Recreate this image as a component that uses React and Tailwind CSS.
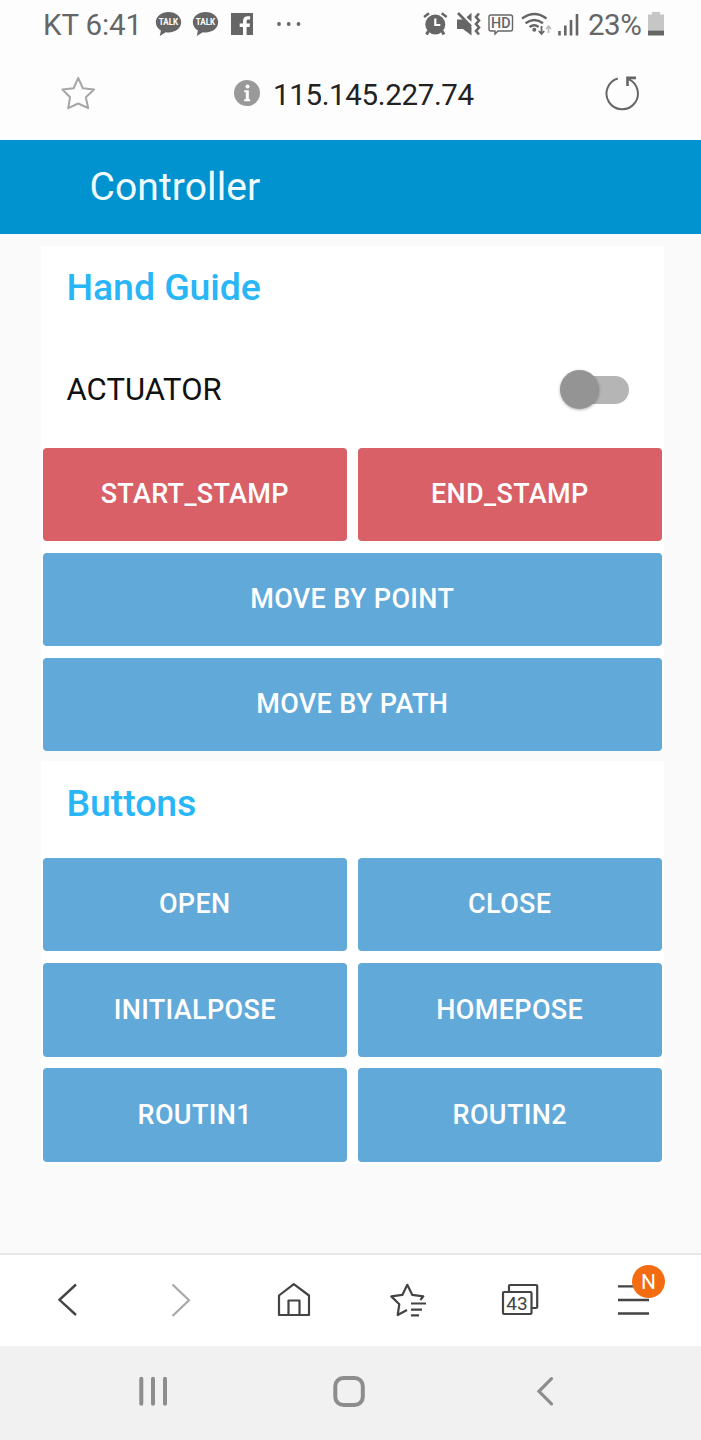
const BLUE = "bg-[#60a9d9]";
const RED = "bg-[#d96066]";

function PadButton({ label, color = BLUE, wide = false }) {
  return (
    <button
      className={`${color} ${wide ? "col-span-2" : ""} h-[93.4px] rounded-[4px] text-center text-[27px] font-medium tracking-[0.35px] text-white`}
    >
      {label}
    </button>
  );
}

function SectionTitle({ children }) {
  return <h2 className="px-[25.500px] text-[37.5px] leading-[44px] font-medium tracking-[-0.1px] text-[#29b6f6]">{children}</h2>;
}

function TalkIcon() {
  return (
    <svg width="27" height="26" viewBox="0 0 27 26" className="shrink-0">
      <path d="M13.5 1C6.3 1 .8 5.500.8 11.300c0 3.700 2.100 6.400 5.100 8.200L4.800 25l6-3.800c.9.200 1.800.2 2.700.2 7.200 0 12.700-4.300 12.700-10.100S20.700 1 13.500 1z" fill="#666" />
      <text x="13.500" y="14.400" textAnchor="middle" textLength="19.500" lengthAdjust="spacingAndGlyphs" fontFamily="Roboto, sans-serif" fontWeight="700" fontSize="9.300" fill="#fff">TALK</text>
    </svg>
  );
}

function StatusBar() {
  return (
    <div className="flex h-[50px] items-start pl-[43px] text-[29.500px] leading-[35px] text-[#666]">
      <span className="mt-[8px] w-[112px] whitespace-nowrap tracking-[-0.1px]">KT 6:41</span>
      <div className="mt-[11px] flex w-[148px] items-start">
        <TalkIcon />
        <div className="w-[10px]" />
        <TalkIcon />
        <svg width="22" height="22" viewBox="0 0 22 22" className="mt-[2px] ml-[12px] shrink-0">
          <rect width="22" height="22" fill="#666" />
          <path d="M12 22v-8H8.700v-3.400H12V8.200c0-3.200 1.800-4.900 4.700-4.900h2.400v3.300h-1.700c-1.300 0-1.800.6-1.800 1.700v2.300H19l-.5 3.400h-2.900v8z" fill="#fff" />
        </svg>
        <svg width="26" height="6" viewBox="0 0 26 6" className="mt-[10px] ml-[23px] shrink-0" fill="#666">
          <circle cx="3" cy="3" r="1.900" /><circle cx="12.700" cy="3" r="1.900" /><circle cx="22.500" cy="3" r="1.900" />
        </svg>
      </div>
      <svg width="158" height="30" viewBox="422 8 158 30" className="mt-[8px] ml-[119px] shrink-0" fill="none" stroke="#666">
        <circle cx="435.300" cy="24.500" r="10" fill="#666" stroke="none" />
        <path d="M424 17l5-3.700M446.700 17l-5-3.700" strokeWidth="2.500" />
        <path d="M428.500 31l-2 3.500M442 31l2 3.500" strokeWidth="3" />
        <path d="M435.300 18.500v6.500h5" stroke="#fff" strokeWidth="2.200" />
        <path d="M457 19.500h6l8.500 7.500v8.500l-8.500-6.500h-6zM466.500 17.200l5-4.500v9z" fill="#666" stroke="none" />
        <path d="M458 13l13 13.500" strokeWidth="2.600" />
        <path d="M479 13.500l-3 3.500 3 3.500-3 3.500 3 3.500-3 3.500 3 3.500" strokeWidth="2.600" />
        <path d="M491 15h19.500q2 0 2 2v12q0 2-2 2h-12.500l-3 3v-3h-4q-2 0-2-2v-12q0-2 2-2z" strokeWidth="1.400" />
        <text x="500.800" y="28.200" textAnchor="middle" textLength="19.500" lengthAdjust="spacingAndGlyphs" fontSize="14.500" fontWeight="500" fontFamily="Roboto, sans-serif" fill="#666" stroke="none">HD</text>
        <path d="M522 18.500q12.500-9 24.500 0M525.500 23.200q9-6.500 17.500 0M529.500 27q5-3.500 9 0" strokeWidth="2.400" />
        <circle cx="534.300" cy="29.800" r="2" fill="#666" stroke="none" />
        <path d="M541.500 26v8M538.800 31l2.700 3 2.700-3" strokeWidth="1.800" />
        <path d="M548.500 33v-7M546 29l2.500-3 2.500 3" stroke="#bbb" strokeWidth="1.600" />
        <path d="M559.500 31v4.500M565.300 25.500v10M571 20v15.500M577 14v21.500" strokeWidth="2.600" />
      </svg>
      <span className="mt-[8px] ml-[8px] w-[60px] whitespace-nowrap text-[29.500px] tracking-[-0.5px]">23%</span>
      <svg width="16" height="25" viewBox="0 0 16 25" className="mt-[12px] shrink-0">
        <path d="M4 0h8v2.500h4V18.500H0V2.500h4z" fill="#c6c6c6" />
        <path d="M0 18.500h16v5H0z" fill="#666" />
      </svg>
    </div>
  );
}

function AddressBar() {
  return (
    <div className="flex h-[90px] items-start pt-[26px]">
      <svg width="36" height="36" viewBox="0 0 36 36" className="ml-[60px] shrink-0" fill="none" stroke="#a6a6a6" strokeWidth="2" strokeLinejoin="round">
        <path d="M18.200 2l4.700 10.300 11.200 1.200-8.300 7.700 2.400 11-10-4.700-10 4.700 1.900-11-7.700-7.700 11.200-1.200z" />
      </svg>
      <svg width="26" height="26" viewBox="0 0 26 26" className="mt-[4px] ml-[138px] shrink-0">
        <circle cx="13" cy="13" r="13" fill="#999" />
        <path d="M10.200 10.300h4.600v8.900h1.400v2h-6v-2h1.600v-6.900h-1.600z" fill="#fff" />
        <circle cx="13.500" cy="6.500" r="2" fill="#fff" />
      </svg>
      <span className="mt-[2px] w-[343px] shrink-0 pl-[13px] text-[29.500px] leading-[35px] tracking-[-0.350px] text-[#222]">115.145.227.74</span>
      <svg width="36" height="36" viewBox="604 76 36 36" className="shrink-0" fill="none" stroke="#666">
        <path d="M618.800 78.500A15.700 15.700 0 1 0 629.500 79.200" strokeWidth="2" />
        <path d="M637 77.900h-8.500v8" strokeWidth="2.600" />
      </svg>
    </div>
  );
}

function BrowserBar() {
  return (
    <nav className="relative h-[93px] border-t-2 border-[#e8e8e8] bg-white">
      <svg width="701" height="91" viewBox="0 1255 701 91" fill="none" stroke="#444" strokeWidth="2.200">
        <path d="M76 1284.500l-16.500 15.300 16.500 15.200" strokeWidth="2.400" />
        <path d="M172.500 1284.500l16.500 15.700-16.500 15.800" stroke="#a8a8a8" />
        <path d="M293.800 1284.200l-14.800 11.300v19.500h30v-19.500zM288.500 1315v-14.500h11v14.500" strokeLinejoin="round" />
        <path d="M407 1310l-9.300 5 1.600-10.800-8-7.800 11-1.500 5-10.100 5 10.100 11 1.500-3 3.600" strokeLinejoin="round" />
        <path d="M411 1303.500h15M411 1309.700h11M411 1315.300h8" />
        <path d="M509 1291.500v-5.500q0-1 1-1h26q1.200 0 1.200 1v21q0 1-1.200 1h-4" />
        <rect x="503" y="1292" width="28.500" height="22" rx="1" />
        <path d="M618 1286.400h15M618 1300h31M618 1313.500h31" strokeWidth="2.300" />
        <text x="517" y="1309.800" textAnchor="middle" fill="#444" stroke="none" fontFamily="Roboto, sans-serif" fontSize="19">43</text>
      </svg>
      <span className="absolute top-[10px] left-[632px] flex h-[33px] w-[33px] items-center justify-center rounded-full bg-[#f36c12] pt-[2px] text-[21px] text-white">N</span>
    </nav>
  );
}

function SystemNav() {
  return (
    <footer className="h-[94px] bg-[#f1f1f1]">
      <svg width="701" height="94" viewBox="0 1346 701 94" fill="none" stroke="#8d8d8d" strokeWidth="4" strokeLinecap="round">
        <path d="M141.300 1378.700v25M153 1378.700v25M165 1378.700v25" />
        <rect x="335.300" y="1378" width="27.500" height="27" rx="8" />
        <path d="M551.500 1378.700l-12.500 12.600 12.500 12.500" strokeWidth="3.200" />
      </svg>
    </footer>
  );
}

export default function App() {
  return (
    <div className="flex h-[1440px] w-[701px] flex-col overflow-hidden bg-[#fafafa] font-[Roboto,sans-serif]">
      <div className="bg-[#fdfdfd]">
        <StatusBar />
        <AddressBar />
      </div>
      <header className="flex h-[94px] items-center bg-[#0093d0] pt-px pl-[89.500px] text-[39px] tracking-[0.1px] text-[#f0fbff]">
        Controller
      </header>
      <main className="flex-1 pl-[41px]">
        <section className="mt-[12px] h-[505px] w-[622.500px] bg-white">
          <div className="pt-[19px]">
            <SectionTitle>Hand Guide</SectionTitle>
          </div>
          <div className="mt-[39px] flex h-[84px] items-center justify-between pr-[34.500px] pl-[25.500px]">
            <span className="text-[31px] tracking-[0.050px] text-[#111]">ACTUATOR</span>
            <span className="relative mb-px h-[28px] w-[62px] rounded-full bg-[#b5b5b5]">
              <span className="absolute -top-[6px] -left-[7px] h-[39px] w-[39px] rounded-full bg-[#949494] shadow-[0_1px_3px_rgba(0,0,0,0.3)]" />
            </span>
          </div>
          <div className="mt-[15.600px] grid grid-cols-2 gap-x-[11.500px] gap-y-[11.800px] px-[2px]">
            <PadButton label="START_STAMP" color={RED} />
            <PadButton label="END_STAMP" color={RED} />
            <PadButton label="MOVE BY POINT" wide />
            <PadButton label="MOVE BY PATH" wide />
          </div>
        </section>
        <section className="mt-[10px] h-[403px] w-[622.500px] bg-white pt-[20px]">
          <SectionTitle>Buttons</SectionTitle>
          <div className="mt-[33px] grid grid-cols-2 gap-x-[11.500px] gap-y-[11.800px] px-[2px]">
            <PadButton label="OPEN" />
            <PadButton label="CLOSE" />
            <PadButton label="INITIALPOSE" />
            <PadButton label="HOMEPOSE" />
            <PadButton label="ROUTIN1" />
            <PadButton label="ROUTIN2" />
          </div>
        </section>
      </main>
      <BrowserBar />
      <SystemNav />
    </div>
  );
}
